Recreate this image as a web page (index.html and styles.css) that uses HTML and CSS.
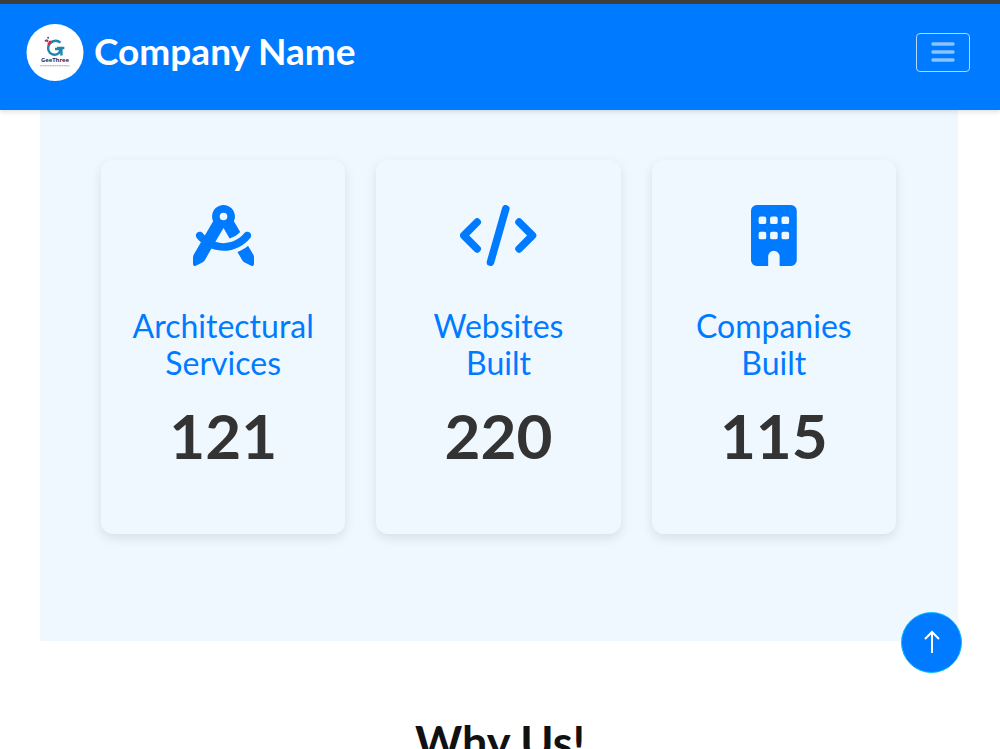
FILE: index.html
```
<!DOCTYPE html>
<html lang="en">
<head>
<meta charset="utf-8">
<meta name="viewport" content="width=device-width, initial-scale=1">
<title>Company Name</title>
<link rel="stylesheet" href="styles.css">
</head>
<body>
<header class="navbar">
  <a class="brand" href="#">
    <svg class="logo" viewBox="0 0 58 58" role="img" aria-label="GeeThree">
      <circle cx="29" cy="29" r="29" fill="#fff"/>
      <path d="M34.500 19C30 15 22 18 22 24.500C22 33 34.500 33.500 34.500 25.500H29" fill="none" stroke="#2186ae" stroke-width="2.500"/>
      <path d="M31 24.500h7.500M35.500 25v7" fill="none" stroke="#2186ae" stroke-width="2.500"/>
      <path d="M20 16l2 2M22 21l2-3M24 17v2" fill="none" stroke="#e51e35" stroke-width="2"/>
      <circle cx="22" cy="14" r="1" fill="#514b8b"/><circle cx="19.500" cy="17" r="1" fill="#514b8b"/>
      <text class="logo-name" x="29" y="39" text-anchor="middle">GeeThree</text>
      <path d="M14 42.500h30" stroke="#a7a4bb" stroke-width="1" stroke-dasharray="2 .4"/>
    </svg>
    <span class="brand-name">Company Name</span>
  </a>
  <button class="menu-button" type="button" aria-label="Toggle navigation">
    <svg viewBox="0 0 30 30" aria-hidden="true"><path d="M5 6h20M5 14h20M5 22h20" fill="none" stroke="currentColor" stroke-width="3.500" stroke-linecap="round"/></svg>
  </button>
</header>
<main>
  <section class="stats" aria-label="Our work">
    <article class="card">
      <svg class="icon" viewBox="0 0 512 512" aria-hidden="true"><path d="M352 96c0 14.3-3.1 27.9-8.8 40.2L396 227.4c-23.7 25.3-54.2 44.1-88.5 53.6L256 192h0 0l-68 117.5c21.5 6.8 44.3 10.5 68.1 10.5c70.7 0 133.8-32.7 174.9-84c11.1-13.8 31.2-16 45-5s16 31.2 5 45C428.1 341.8 347 384 256 384c-35.4 0-69.4-6.4-100.7-18.1L98.7 463.7C94 471.8 87 478.4 78.6 482.6L23.2 510.3c-5 2.5-10.9 2.2-15.6-.7S0 501.5 0 496V440.6c0-8.4 2.2-16.7 6.5-24.1l60-103.7C53.7 301.6 41.8 289.3 31.2 276c-11.1-13.8-8.8-33.9 5-45s33.9-8.8 45 5c5.7 7.1 11.8 13.8 18.2 20.1l69.4-119.9c-5.6-12.2-8.8-25.8-8.8-40.2c0-53 43-96 96-96s96 43 96 96zm21 297.900c32.600-12.800 62.500-30.800 88.900-52.900l43.700 75.500c4.200 7.300 6.500 15.600 6.500 24.100V496c0 5.500-2.900 10.700-7.600 13.600s-10.600 3.200-15.600 .7l-55.400-27.700c-8.400-4.200-15.400-10.800-20.100-18.900L373 393.900zM256 128a32 32 0 1 0 0-64 32 32 0 1 0 0 64z"/></svg>
      <h2>Architectural Services</h2>
      <p class="count">121</p>
    </article>
    <article class="card">
      <svg class="icon" viewBox="0 0 640 512" aria-hidden="true"><path d="M144 144L32 256l112 112M496 144l112 112-112 112M384 32L256 480" fill="none" stroke="currentColor" stroke-width="64" stroke-linecap="round" stroke-linejoin="round"/></svg>
      <h2>Websites Built</h2>
      <p class="count">220</p>
    </article>
    <article class="card">
      <svg class="icon" viewBox="0 0 384 512" aria-hidden="true"><path fill-rule="evenodd" d="M48 0h288a48 48 0 0 1 48 48v416a48 48 0 0 1-48 48h-96v-80a48 48 0 0 0-96 0v80H48a48 48 0 0 1-48-48V48A48 48 0 0 1 48 0zM80 96a16 16 0 0 0-16 16v32a16 16 0 0 0 16 16h32a16 16 0 0 0 16-16v-32a16 16 0 0 0-16-16zm96 0a16 16 0 0 0-16 16v32a16 16 0 0 0 16 16h32a16 16 0 0 0 16-16v-32a16 16 0 0 0-16-16zm96 0a16 16 0 0 0-16 16v32a16 16 0 0 0 16 16h32a16 16 0 0 0 16-16v-32a16 16 0 0 0-16-16zM80 224a16 16 0 0 0-16 16v32a16 16 0 0 0 16 16h32a16 16 0 0 0 16-16v-32a16 16 0 0 0-16-16zm96 0a16 16 0 0 0-16 16v32a16 16 0 0 0 16 16h32a16 16 0 0 0 16-16v-32a16 16 0 0 0-16-16zm96 0a16 16 0 0 0-16 16v32a16 16 0 0 0 16 16h32a16 16 0 0 0 16-16v-32a16 16 0 0 0-16-16z"/></svg>
      <h2>Companies Built</h2>
      <p class="count">115</p>
    </article>
  </section>
  <section class="why"><h2>Why Us!</h2></section>
</main>
<a class="back-to-top" href="#" aria-label="Back to top"><svg viewBox="0 0 16 24" aria-hidden="true"><path d="M8 23V2M1 9l7-7 7 7" fill="none" stroke="currentColor" stroke-width="2"/></svg></a>
</body>
</html>
```
FILE: styles.css
```
* { box-sizing: border-box; }
html { height: 100%; }
body {
  height: 100%;
  margin: 0;
  overflow: hidden;
  background: #fff;
  color: #111;
  font-family: Lato, "Liberation Sans", sans-serif;
}
h2, p { margin: 0; }
.navbar {
  position: relative;
  z-index: 1;
  display: flex;
  align-items: flex-start;
  justify-content: space-between;
  padding: 20px 30px 29px 26px;
  border-top: 4px solid #3f3f3f;
  background: #007bff;
  box-shadow: 0 2px 5px rgba(0, 0, 0, 0.12);
}
.brand {
  display: flex;
  align-items: flex-start;
  gap: 10px;
  color: #fff;
  font-size: 37px;
  font-weight: 700;
  line-height: 53px;
  text-decoration: none;
}
.logo { width: 58px; height: 57px; }
.logo-name {
  fill: #302653;
  font-family: "Open Sans", sans-serif;
  font-size: 6px;
  font-weight: 700;
}
.menu-button {
  display: grid;
  place-items: center;
  width: 54px;
  height: 39px;
  margin-top: 9px;
  padding: 0;
  border: 1px solid #b3d7ff;
  border-radius: 4px;
  background: transparent;
  color: #8cc4ff;
}
.menu-button svg { width: 30px; height: 30px; }
.stats {
  display: grid;
  grid-template-columns: repeat(3, 1fr);
  gap: 31px;
  margin: 0 42px 0 40px;
  padding: 50px 62px 107px 61px;
  background: #eff7ff;
}
.card {
  display: flex;
  flex-direction: column;
  align-items: center;
  padding: 45px 30px 62px;
  border-radius: 12px;
  background: #f0f8ff;
  box-shadow: 0 4px 12px rgba(0, 0, 0, 0.1);
  color: #007bff;
  text-align: center;
}
.icon { height: 61px; fill: currentColor; }
.card h2 {
  margin-top: 41px;
  font-size: 32px;
  font-weight: 400;
  line-height: 37px;
}
.count {
  margin-top: 17px;
  color: #333;
  font-size: 62px;
  font-weight: 700;
  line-height: 74px;
}
.why { padding-top: 75px; text-align: center; }
.why h2 { font-size: 45px; line-height: 52px; }
.back-to-top {
  position: fixed;
  right: 38px;
  bottom: 76px;
  display: grid;
  place-items: center;
  width: 61px;
  height: 61px;
  border: 1px solid #00bfff;
  border-radius: 50%;
  background: #007bff;
  color: #fff;
}
.back-to-top svg { width: 16px; height: 24px; margin-bottom: 2px; }
```
